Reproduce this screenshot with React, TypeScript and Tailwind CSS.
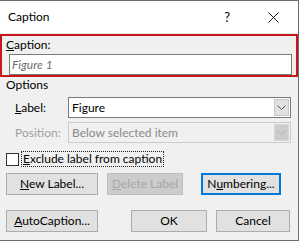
import React from "react";

// Word "Caption" dialog, Windows 10 look.

function Chevron({ disabled }: { disabled?: boolean }) {
  return (
    <svg width="9" height="5" viewBox="0 0 9 5" className="block">
      <path
        d="M0.5 0.5 L4.5 4.5 L8.5 0.5"
        fill="none"
        stroke={disabled ? "#b4b4b4" : "#505050"}
        strokeWidth="1"
      />
    </svg>
  );
}

function Select({ value, disabled }: { value: string; disabled?: boolean }) {
  return (
    <div
      className={`flex h-[21px] w-[223px] items-stretch border ${
        disabled ? "border-[#cccccc] bg-[#f0f0f0] text-[#8a8a8a]" : "border-[#7a7a7a] bg-white text-black"
      }`}
    >
      <div className="flex flex-1 items-center pl-[3px]">{value}</div>
      <div
        className={`m-px flex w-[15px] items-center justify-center border ${
          disabled ? "border-[#d6d6d6] bg-[#cccccc]" : "border-[#c8c8c8] bg-[#e1e1e1]"
        }`}
      >
        <Chevron disabled={disabled} />
      </div>
    </div>
  );
}

function Button({
  children,
  width,
  primary,
  disabled,
}: {
  children: React.ReactNode;
  width: string;
  primary?: boolean;
  disabled?: boolean;
}) {
  return (
    <div
      className={`flex h-[22px] items-center justify-center ${width} ${
        disabled
          ? "border border-[#bfbfbf] bg-[#cccccc] text-[#a6a6a6]"
          : primary
          ? "border-2 border-[#0078d7] bg-[#e1e1e1] text-black"
          : "border border-[#adadad] bg-[#e1e1e1] text-black"
      }`}
    >
      {children}
    </div>
  );
}

export default function App() {
  return (
    <div
      className="flex h-[241px] w-[299px] flex-col border-t border-r border-b border-[#6e6e6e] bg-[#f0f0f0] text-[12px] leading-[16px] text-black"
      style={{ fontFamily: 'Lato, "Noto Sans", sans-serif' }}
    >
      {/* title bar */}
      <div className="flex h-[32px] items-center bg-white pl-[8px]">
        <span className="flex-1">Caption</span>
        <span className="mr-[38px] text-[13px]">?</span>
        <svg width="11" height="11" viewBox="0 0 11 11" className="mr-[19px]">
          <path d="M0.5 0.5 L10.5 10.5 M10.5 0.5 L0.5 10.5" stroke="#111" strokeWidth="1" />
        </svg>
      </div>

      {/* caption box, highlighted */}
      <div className="mt-px h-[43px] w-[298px] border-2 border-[#c8161d] pl-[4px]">
        <div className="pt-px">
          <span className="underline">C</span>aption:
        </div>
        <div className="ml-[3px] mt-px flex h-[21px] w-[283px] items-center border border-[#7a7a7a] bg-white pl-[2px] italic text-[#6d6d6d]">
          Figure 1
        </div>
      </div>

      <div className="pl-[6px]">
        <div className="leading-[15px]">Options</div>

        <div className="mt-[5px] flex items-center">
          <div className="w-[62px] pl-[9px]">
            <span className="underline">L</span>abel:
          </div>
          <Select value="Figure" />
        </div>
        <div className="mt-[4px] flex items-center">
          <div className="w-[62px] pl-[9px] text-[#a0a0a0]">Position:</div>
          <Select value="Below selected item" disabled />
        </div>

        <div className="mt-[8px] flex items-center">
          <div className="h-[13px] w-[13px] border border-[#333333] bg-white" />
          <div className="ml-[2px] border border-dotted border-[#222] px-px leading-[14px]">
            <span className="underline">E</span>xclude label from caption
          </div>
        </div>

        <div className="mt-[6px] flex">
          <Button width="w-[92px]">
            <span>
              <span className="underline">N</span>ew Label...
            </span>
          </Button>
          <div className="ml-[9px]">
            <Button width="w-[76px]" disabled>
              <span>
                <span className="underline">D</span>elete Label
              </span>
            </Button>
          </div>
          <div className="ml-[18px]">
            <Button width="w-[80px]" primary>
              <span>
                N<span className="underline">u</span>mbering...
              </span>
            </Button>
          </div>
        </div>

        <div className="mt-[15px] flex">
          <Button width="w-[92px]">
            <span>
              <span className="underline">A</span>utoCaption...
            </span>
          </Button>
          <div className="ml-[33px]">
            <Button width="w-[76px]">OK</Button>
          </div>
          <div className="ml-[9px]">
            <Button width="w-[74px]">Cancel</Button>
          </div>
        </div>
      </div>
    </div>
  );
}
